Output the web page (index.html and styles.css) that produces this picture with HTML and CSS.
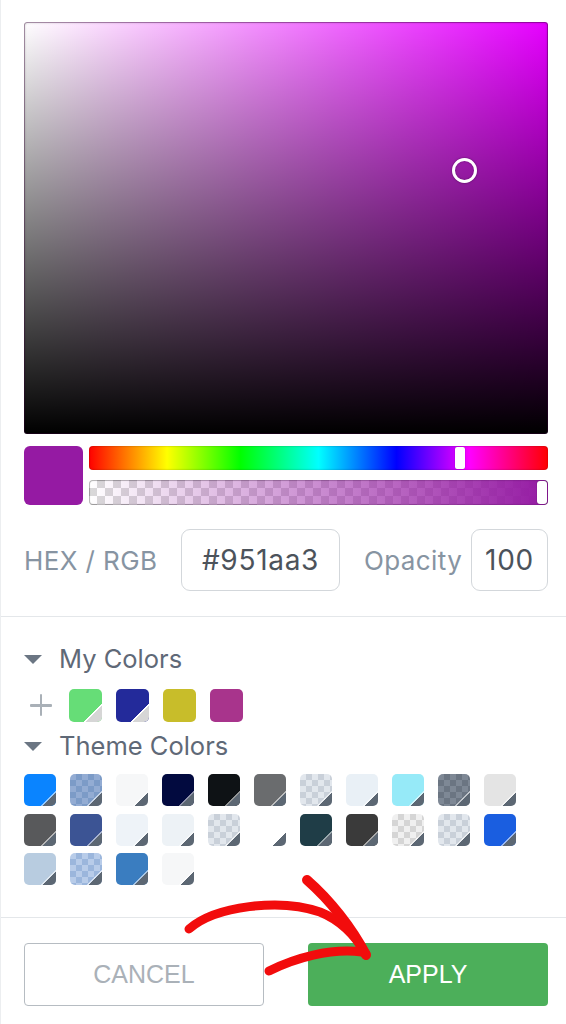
FILE: index.html
```html
<!DOCTYPE html>
<html>
<head>
<meta charset="utf-8">
<link rel="stylesheet" href="styles.css">
</head>
<body>
<div class="panel">
  <section class="picker">
    <div class="sat">
      <div class="sat-thumb"></div>
    </div>
    <div class="controls">
      <div class="preview"></div>
      <div class="bars">
        <div class="hue"><div class="hue-thumb"></div></div>
        <div class="alpha"><div class="alpha-fill"></div><div class="alpha-thumb"></div></div>
      </div>
    </div>
    <div class="hexrow">
      <span class="lbl hexlbl">HEX / RGB</span>
      <div class="field hex">#951aa3</div>
      <span class="lbl oplbl">Opacity</span>
      <div class="field op">100</div>
    </div>
  </section>
  <section class="colors">
    <div class="heading"><span class="caret"></span>My Colors</div>
    <div class="mine">
      <span class="plus"></span>
      <span class="sw mc tri" style="background:#66dd77"></span>
      <span class="sw mc tri" style="background:#232a9a"></span>
      <span class="sw mc" style="background:#c8bd2a"></span>
      <span class="sw mc" style="background:#a8348c"></span>
    </div>
    <div class="heading"><span class="caret"></span>Theme Colors</div>
    <div class="theme">
      <span class="sw" style="background:#0a84ff"></span>
      <span class="sw chk-blue"></span>
      <span class="sw" style="background:#f6f7f8"></span>
      <span class="sw" style="background:#020a3f"></span>
      <span class="sw" style="background:#0e1215"></span>
      <span class="sw" style="background:#6a6c6e"></span>
      <span class="sw chk-grey"></span>
      <span class="sw" style="background:#e9f0f6"></span>
      <span class="sw" style="background:#96eaf8"></span>
      <span class="sw chk-dark"></span>
      <span class="sw" style="background:#e4e4e4"></span>

      <span class="sw" style="background:#58595b"></span>
      <span class="sw" style="background:#3c5494"></span>
      <span class="sw" style="background:#eef3f8"></span>
      <span class="sw" style="background:#edf2f6"></span>
      <span class="sw chk-grey"></span>
      <span class="sw" style="background:#ffffff"></span>
      <span class="sw" style="background:#1f3d47"></span>
      <span class="sw" style="background:#3a3a3a"></span>
      <span class="sw chk-light"></span>
      <span class="sw chk-grey"></span>
      <span class="sw" style="background:#1a5ee0"></span>

      <span class="sw" style="background:#b8cce0"></span>
      <span class="sw chk-lblue"></span>
      <span class="sw" style="background:#3a7dc0"></span>
      <span class="sw" style="background:#f6f7f8"></span>
    </div>
  </section>
  <section class="actions">
    <button class="btn cancel">CANCEL</button>
    <button class="btn apply">APPLY</button>
  </section>
  <svg class="arrow" width="566" height="1024" viewBox="0 0 566 1024">
    <g fill="none" stroke="#f20c0c" stroke-linecap="round">
      <path stroke-width="9" d="M189 929 C 215 906, 280 898, 320 912 C 340 920, 355 935, 366 954"/>
      <path stroke-width="10" d="M307 880 C 330 900, 352 928, 366 955"/>
      <path stroke-width="9" d="M269 971 C 295 958, 330 948, 362 952"/>
    </g>
  </svg>
</div>
</body>
</html>
```
FILE: styles.css
```css
* { box-sizing: border-box; }
html, body { margin: 0; padding: 0; background: #fff; }
body { font-family: Inter, "Open Sans", sans-serif; }

.panel {
  position: relative;
  width: 566px;
  height: 1024px;
  border-left: 1px solid #eceef0;
  overflow: hidden;
}

.picker {
  padding: 22px 18px 0 23px;
  height: 617px;
  border-bottom: 1px solid #e4e7ea;
}

.sat {
  position: relative;
  height: 412px;
  border-radius: 3px;
  background:
    linear-gradient(to bottom, rgba(0,0,0,0), #000),
    linear-gradient(to right, #fff, rgba(255,255,255,0)),
    #e600ff;
  box-shadow: inset 0 0 0 1px rgba(60,0,60,.35), inset 0 0 3px rgba(0,0,0,.4);
}
.sat-thumb {
  position: absolute;
  left: 428px;
  top: 136px;
  width: 25px;
  height: 25px;
  border-radius: 50%;
  border: 3px solid #fff;
  box-shadow: 0 0 2px rgba(0,0,0,.5), inset 0 0 2px rgba(0,0,0,.4);
}

.controls {
  display: flex;
  gap: 6px;
  margin-top: 12px;
}
.preview {
  width: 59px;
  height: 59px;
  border-radius: 6px;
  background: #951aa3;
  flex: none;
}
.bars {
  flex: 1;
  display: flex;
  flex-direction: column;
  gap: 10px;
}
.hue, .alpha {
  position: relative;
  height: 24px;
  border-radius: 4px;
}
.hue {
  background: linear-gradient(to right, #f00 0%, #ff0 17%, #0f0 33%, #0ff 50%, #00f 67%, #f0f 83%, #f00 100%);
  box-shadow: inset 0 0 2px rgba(0,0,0,.35);
}
.hue-thumb {
  position: absolute;
  left: 366px;
  top: 1px;
  width: 10px;
  height: 22px;
  background: #fff;
  border-radius: 2px;
  box-shadow: 0 0 1px rgba(0,0,0,.5);
}
.alpha {
  height: 25px;
  background: repeating-conic-gradient(#d9d9d9 0 25%, #fff 0 50%) 0 0 / 16px 16px;
  box-shadow: inset 0 0 0 1px rgba(0,0,0,.2);
  overflow: hidden;
}
.alpha-fill {
  position: absolute;
  inset: 0;
  border-radius: 4px;
  background: linear-gradient(to right, rgba(149,26,163,0), #951aa3);
  box-shadow: inset 0 0 2px rgba(0,0,0,.35);
}
.alpha-thumb {
  position: absolute;
  right: 1px;
  top: 1px;
  width: 10px;
  height: 23px;
  background: #fff;
  border-radius: 3px;
  box-shadow: 0 0 1px rgba(0,0,0,.6);
}

.hexrow {
  display: flex;
  align-items: center;
  margin-top: 24px;
  height: 62px;
}
.lbl {
  font-size: 26px;
  letter-spacing: 0.4px;
  color: #8794a2;
  white-space: nowrap;
}
.hexlbl { width: 133px; }
.oplbl { width: 96px; }
.field {
  height: 62px;
  border: 1px solid #d3d7db;
  border-radius: 9px;
  display: flex;
  align-items: center;
  justify-content: center;
  font-size: 28px;
  letter-spacing: 0.7px;
  color: #4c535b;
}
.hex { width: 159px; margin-left: 24px; margin-right: 24px; }
.op { width: 77px; margin-left: 11px; }

.colors {
  padding: 24px 18px 0 23px;
  height: 301px;
  border-bottom: 1px solid #e4e7ea;
}
.heading {
  display: flex;
  align-items: center;
  font-size: 25.5px;
  color: #5f6977;
  height: 36px;
  line-height: 36px;
}
.caret {
  width: 0;
  height: 0;
  border-left: 9px solid transparent;
  border-right: 9px solid transparent;
  border-top: 9px solid #6b7683;
  margin-right: 17px;
}
.mine {
  display: flex;
  align-items: center;
  gap: 14px;
  margin: 12px 0 6px;
  height: 33px;
}
.plus {
  position: relative;
  width: 31px;
  height: 33px;
}
.plus::before, .plus::after {
  content: "";
  position: absolute;
  background: #a9b0b7;
  border-radius: 1px;
}
.plus::before { left: 6px; top: 15px; width: 22px; height: 2.5px; }
.plus::after { left: 15.75px; top: 5.25px; width: 2.5px; height: 22px; }

.sw {
  position: relative;
  display: block;
  width: 32px;
  height: 32px;
  border-radius: 5px;
  overflow: hidden;
}
.sw::after {
  content: "";
  position: absolute;
  inset: 0;
  background: linear-gradient(135deg, transparent 0 76.5%, rgba(255,255,255,.55) 76.5% 78.5%, #5c6773 78.5%);
}
.sw.mc { width: 33px; height: 33px; }
.sw.mc::after { background: none; }
.sw.mc.tri::after {
  background: linear-gradient(135deg, transparent 0 72%, #fff 72% 75%, #d6d6d6 75%);
}

.theme {
  display: grid;
  grid-template-columns: repeat(11, 32px);
  column-gap: 14px;
  row-gap: 7.5px;
  margin-top: 10px;
}
.chk-blue { background: repeating-conic-gradient(#7c9bc7 0 25%, #93acd3 0 50%) 0 0 / 12px 12px; }
.chk-grey { background: repeating-conic-gradient(#c9d0d9 0 25%, #e2e7ed 0 50%) 0 0 / 12px 12px; }
.chk-dark { background: repeating-conic-gradient(#6b7582 0 25%, #7e8895 0 50%) 0 0 / 12px 12px; }
.chk-light { background: repeating-conic-gradient(#d5d5d5 0 25%, #f0f0f0 0 50%) 0 0 / 12px 12px; }
.chk-lblue { background: repeating-conic-gradient(#9bb6dc 0 25%, #b8cce9 0 50%) 0 0 / 12px 12px; }

.actions {
  display: flex;
  justify-content: space-between;
  padding: 25px 18px 0 23px;
}
.btn {
  width: 240px;
  height: 63px;
  border-radius: 4px;
  font-family: "Liberation Sans", Arial, sans-serif;
  font-size: 25px;
}
.cancel {
  background: #fff;
  border: 1.5px solid #b6bcc2;
  color: #aab1b8;
}
.apply {
  background: #4caf5a;
  border: none;
  color: #fff;
}

.arrow {
  position: absolute;
  left: -1px;
  top: 0;
  pointer-events: none;
}
```
